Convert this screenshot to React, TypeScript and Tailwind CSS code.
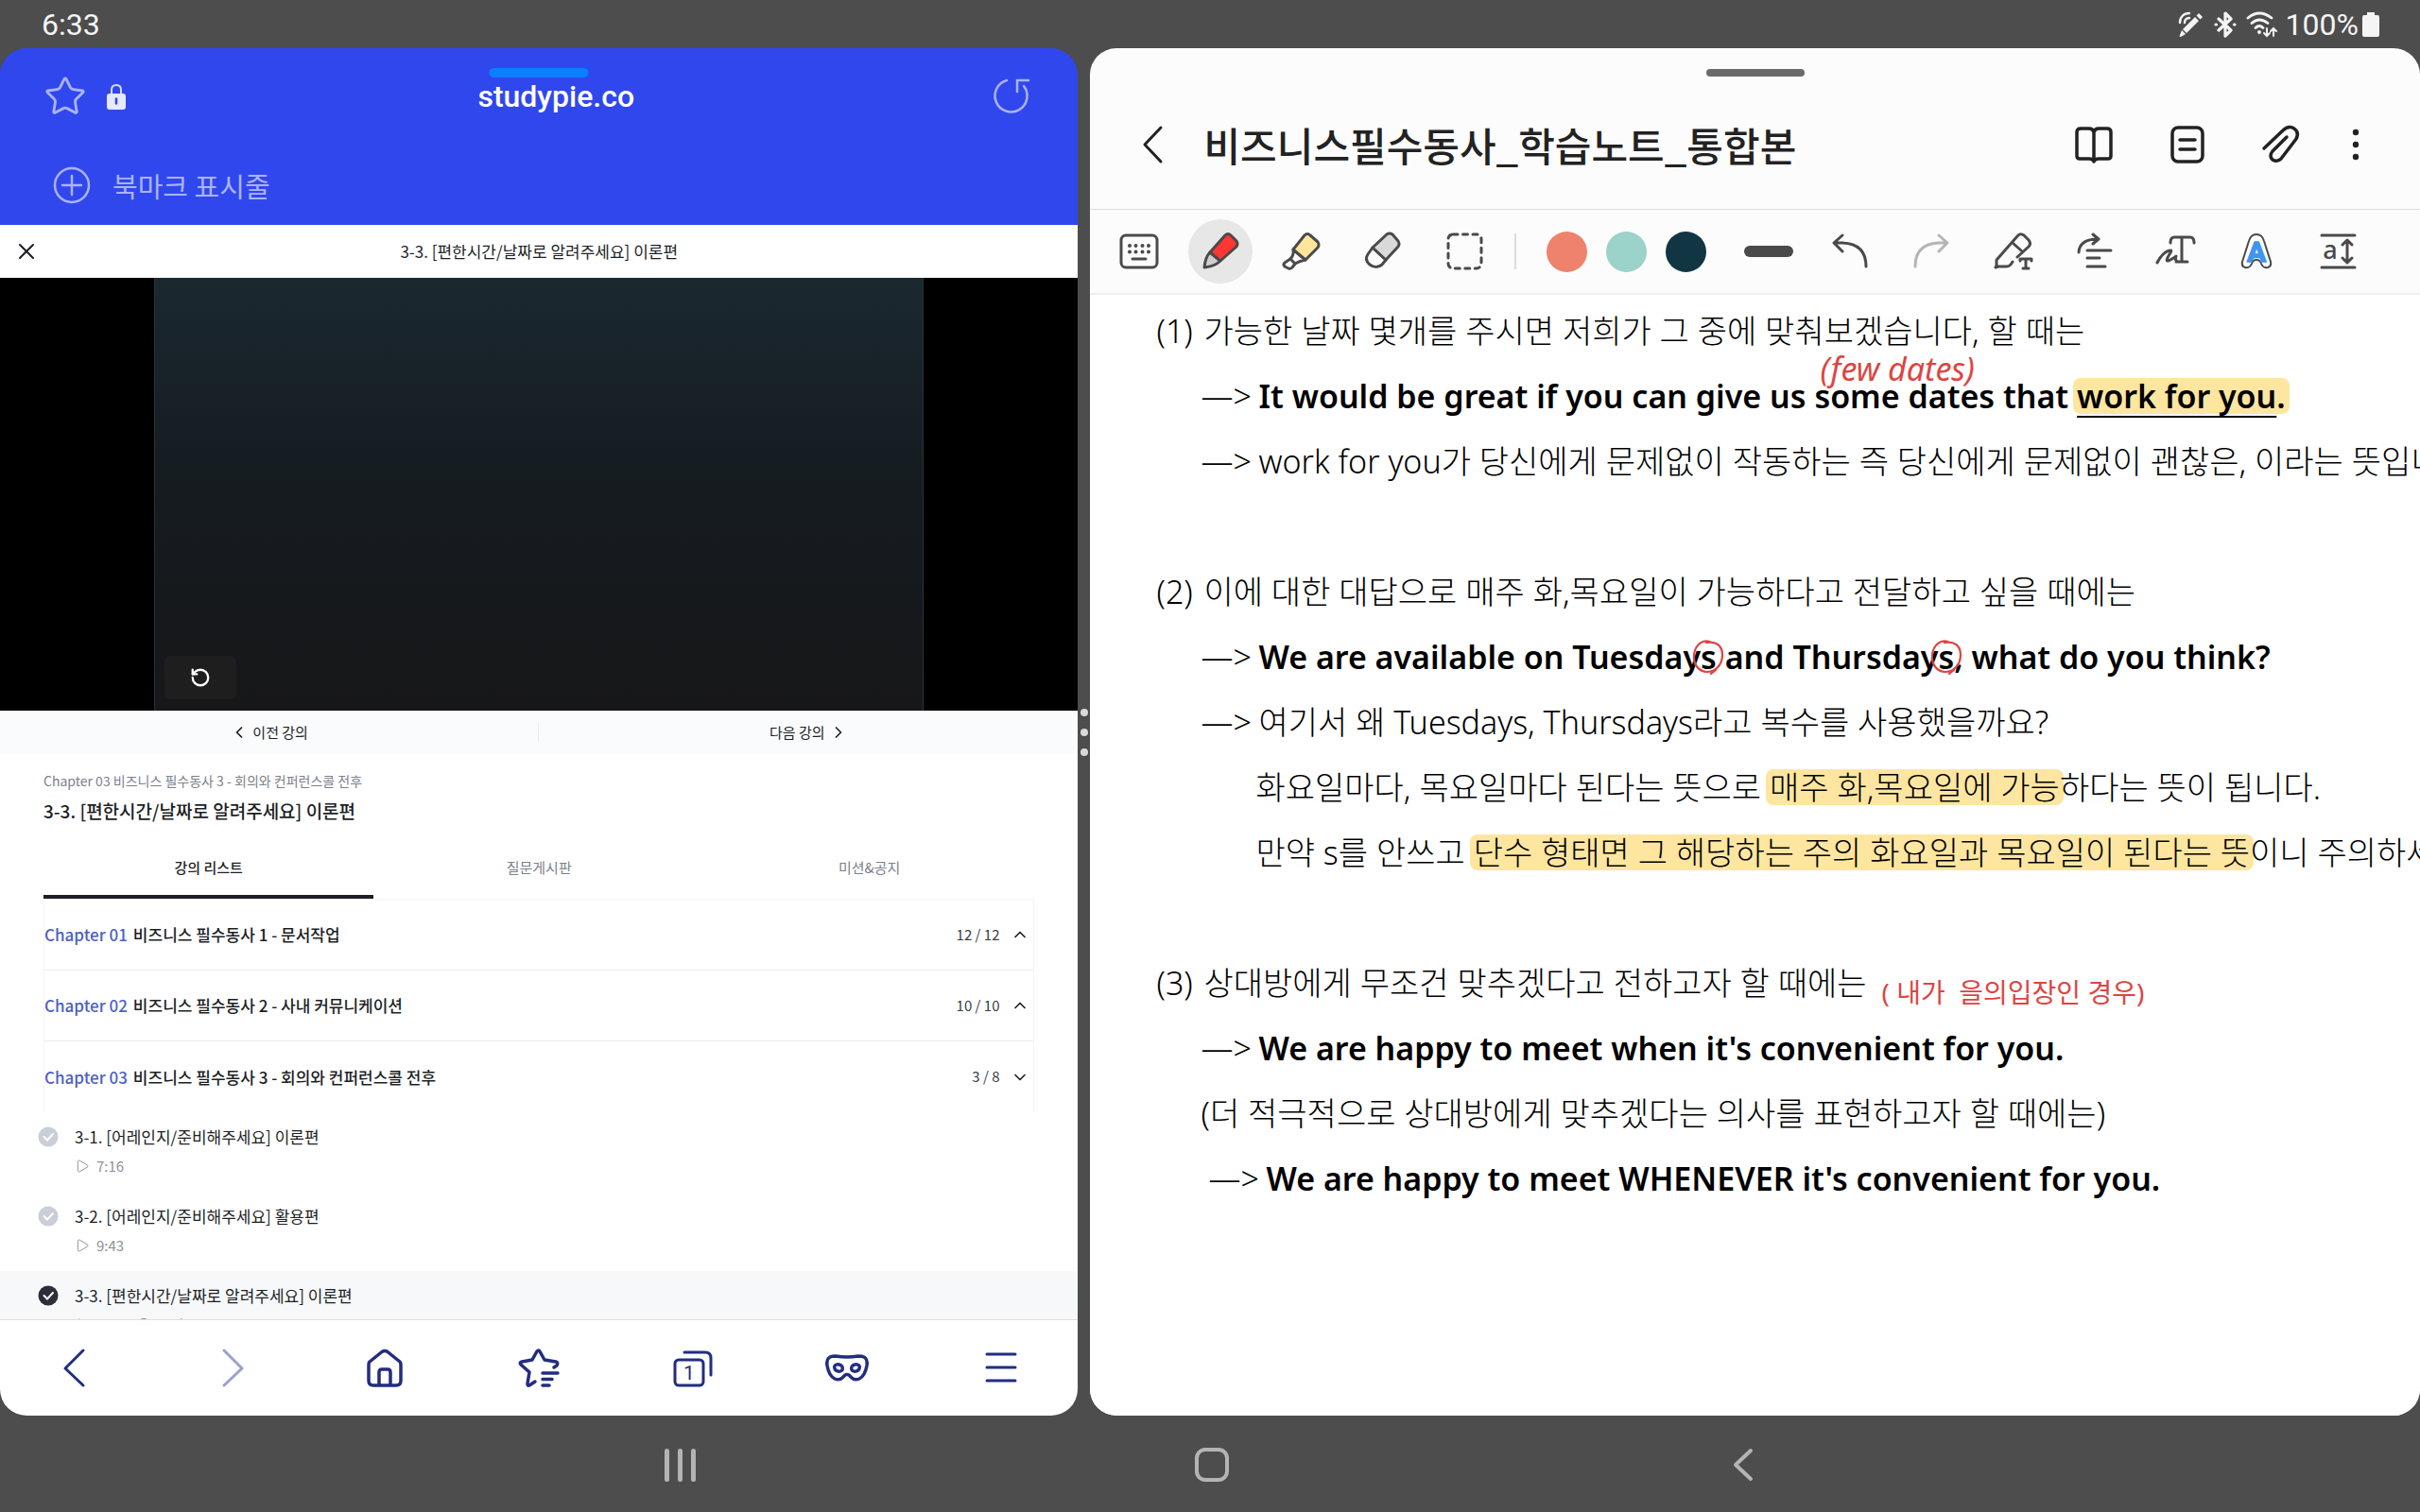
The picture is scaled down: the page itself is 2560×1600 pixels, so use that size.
import type { ReactNode } from "react";
import { ChevronDown, ChevronLeft, ChevronRight, ChevronUp, Circle, Play, RotateCcw, Star, X } from "lucide-react";

const SANS = "font-['Noto_Sans_CJK_KR','Noto_Sans',sans-serif]";
const NOTE = "font-['Noto_Sans','Noto_Sans_CJK_KR',sans-serif]";

type IconProps = { children: ReactNode; className?: string; w?: number };

/** Line icon on a 48px artboard. */
function Icon({ children, className = "", w = 3 }: IconProps) {
  return (
    <svg viewBox="0 0 48 48" className={`h-12 w-12 shrink-0 ${className}`} fill="none" stroke="currentColor" strokeWidth={w} strokeLinecap="round" strokeLinejoin="round" aria-hidden="true">
      {children}
    </svg>
  );
}

function StatusBar() {
  return (
    <header className="flex h-[51px] shrink-0 items-center justify-between pl-11 pr-[43px] font-['Roboto',sans-serif] text-[32px] text-[#f5f5f5]">
      <time>6:33</time>
      <div className="flex items-center">
        {/* S pen */}
        <svg viewBox="0 0 28 28" className="mr-2.5 h-7 w-7" fill="none" stroke="currentColor" strokeWidth="2.4" strokeLinecap="round" aria-label="S Pen">
          <path d="M2 12C2 6 6 2 12 2M7 12c0-3 2-5 5-5" />
          <path d="M22 2l4 4-2.500 2.500-4-4zM18 6l4 4L9 23l-4-4z" fill="currentColor" stroke="none" />
          <path d="M4 20l4 4-5 3q-2 0-1-2z" fill="currentColor" stroke="none" />
        </svg>
        <svg viewBox="0 0 24 28" className="mr-2.5 h-7 w-6" fill="none" stroke="currentColor" strokeWidth="3.200" strokeLinejoin="round" strokeLinecap="round" aria-label="Bluetooth">
          <path d="M5 8l13 12-6 6V2l6 6L5 20" />
          <path d="M2 14h.5M21.500 14h.5" />
        </svg>
        <svg viewBox="0 0 34 28" className="mr-2 h-7 w-[34px]" fill="none" stroke="currentColor" strokeWidth="2.800" strokeLinecap="round" aria-label="Wi-Fi">
          <path d="M2 7q12-10 25 0M6 12.500q8-7 17 0M10 17.500q4-4 8 0" />
          <circle cx="14" cy="22" r="2" fill="currentColor" stroke="none" />
          <path d="M22 18v8m-3-3l3 3 3-3M29 26v-8m-3 3l3-3 3 3" strokeWidth="2" />
        </svg>
        <span>100%</span>
        <svg viewBox="0 0 18 26" className="ml-1 h-[26px] w-[18px]" fill="currentColor" aria-label="Battery">
          <path d="M5 0h8v3h3q2 0 2 2v19q0 2-2 2H2q-2 0-2-2V5q0-2 2-2h3z" />
        </svg>
      </div>
    </header>
  );
}

function BrowserHeader() {
  return (
    <div className="relative flex h-[187px] shrink-0 flex-col bg-[#3147ee] text-[#aab4fa]">
      <div className="absolute left-1/2 top-[21px] h-[10px] w-[105px] -translate-x-1/2 rounded-full bg-[#0a80ff]" />
      <div className="flex h-[102px] items-center px-[46px]">
        <div className="flex flex-1 items-center gap-[21px]">
          <button aria-label="북마크 추가"><Star className="h-[46px] w-[46px]" strokeWidth={1.5} /></button>
          <svg viewBox="0 0 20 28" className="h-7 w-5" aria-label="보안 연결">
            <path d="M5 13V7q0-5 5-5t5 5v6" fill="none" stroke="#d5daff" strokeWidth="2" />
            <rect x="0" y="11" width="20" height="17" rx="3" fill="#e6e9ff" />
            <path d="M10 16.500v5" stroke="#3147ee" strokeWidth="2.500" strokeLinecap="round" />
          </svg>
        </div>
        <span className="ml-9 font-['Roboto',sans-serif] text-[32px] font-medium text-white">studypie.co</span>
        <div className="flex flex-1 justify-end">
          <button aria-label="새로고침"><Icon w={2.500}><path d="M19 7a17 17 0 1 0 18 6M30 19V7h12" strokeLinejoin="miter" /></Icon></button>
        </div>
      </div>
      <button className="flex flex-1 items-center gap-[19px] px-[52px]">
        <Icon w={2.500}><circle cx="24" cy="24" r="18" /><path d="M24 14v20M14 24h20" /></Icon>
        <span className="text-[29px] leading-[44px]">북마크 표시줄</span>
      </button>
    </div>
  );
}

function Player() {
  return (
    <div className="flex shrink-0 justify-center bg-black">
      <div className="flex aspect-video w-[71.4%] items-end border-x border-[#2c3338] bg-linear-to-b from-[#1a2830] via-[#151b1f] to-[#171719] px-2.5 pb-3">
        <button aria-label="다시 재생" className="grid h-[46px] w-[76px] place-items-center rounded-md bg-[#1e1e1e] text-white">
          <RotateCcw className="h-[22px] w-[22px]" strokeWidth={2.500} />
        </button>
      </div>
    </div>
  );
}

const CHAPTERS = [
  { no: "Chapter 01", title: "비즈니스 필수동사 1 - 문서작업", count: "12 / 12", open: false },
  { no: "Chapter 02", title: "비즈니스 필수동사 2 - 사내 커뮤니케이션", count: "10 / 10", open: false },
  { no: "Chapter 03", title: "비즈니스 필수동사 3 - 회의와 컨퍼런스콜 전후", count: "3 / 8", open: true },
];

const LESSONS = [
  { title: "3-1. [어레인지/준비해주세요] 이론편", time: "7:16", active: false },
  { title: "3-2. [어레인지/준비해주세요] 활용편", time: "9:43", active: false },
  { title: "3-3. [편한시간/날짜로 알려주세요] 이론편", time: "8:21", active: true },
];

function LessonPage() {
  return (
    <div className="flex min-h-0 flex-1 flex-col overflow-hidden bg-white text-[#1c1f26]">
      <div className="flex h-14 shrink-0 items-center px-3.5">
        <button aria-label="닫기"><X className="h-7 w-7" strokeWidth={1.75} /></button>
        <h1 className="flex-1 pr-7 text-center text-[17px]">3-3. [편한시간/날짜로 알려주세요] 이론편</h1>
      </div>
      <Player />
      <nav className="grid h-[46px] shrink-0 grid-cols-2 items-center bg-[#fafbfd] text-[15px]">
        <button className="flex h-5 items-center justify-center gap-1 border-r border-[#e9ebee]"><ChevronLeft className="h-5 w-5" />이전 강의</button>
        <button className="flex h-5 items-center justify-center gap-1">다음 강의<ChevronRight className="h-5 w-5" /></button>
      </nav>
      <div className="shrink-0 px-[46px]">
        <p className="mt-4 text-sm leading-6 text-[#7b818a]">Chapter 03 비즈니스 필수동사 3 - 회의와 컨퍼런스콜 전후</p>
        <h2 className="mt-1 text-[19px] leading-8 font-medium">3-3. [편한시간/날짜로 알려주세요] 이론편</h2>
        <div role="tablist" className="mt-4 grid h-[62px] grid-cols-3 border-b border-[#f4f5f6] text-[15px] text-[#7b818a]">
          <button role="tab" aria-selected="true" className="border-b-4 border-[#1c1f2a] font-medium text-[#1c1f26]">강의 리스트</button>
          <button role="tab" className="border-b-4 border-transparent">질문게시판</button>
          <button role="tab" className="border-b-4 border-transparent">미션&amp;공지</button>
        </div>
        <div className="divide-y divide-[#ececee] border-x border-[#f4f5f6]">
          {CHAPTERS.map((c) => (
            <button key={c.no} aria-expanded={c.open} className="flex h-[75px] w-full items-center pr-1 text-left text-[17px] font-medium">
              <span className="mr-1.5 text-[#4c5fc4]">{c.no}</span>
              <span>{c.title}</span>
              <span className="ml-auto text-[15px] font-normal text-[#3a3e46]">{c.count}</span>
              {c.open ? <ChevronDown className="ml-3 h-5 w-5" /> : <ChevronUp className="ml-3 h-5 w-5" />}
            </button>
          ))}
        </div>
      </div>
      <ul>
        {LESSONS.map((l) => (
          <li key={l.title} className={`flex h-[84px] items-start gap-[17px] px-10 pt-[14px] ${l.active ? "bg-[#f7f8fa]" : ""}`}>
            <svg viewBox="0 0 22 22" className="mt-px h-[22px] w-[22px]" aria-label="수강 완료">
              <circle cx="11" cy="11" r="10.500" fill={l.active ? "#2b2f3a" : "#c9ced8"} />
              <path d="M6.500 11l3.500 3.500 6-6.500" fill="none" stroke="#fff" strokeWidth="2" strokeLinecap="round" />
            </svg>
            <div>
              <a href="#lesson" className="block text-[17px] leading-6">{l.title}</a>
              <p className="mt-[7px] flex items-center gap-[7px] text-[15px] leading-6 text-[#8d9299]">
                <Play className="h-4 w-4" strokeWidth={1.5} />{l.time}
                {l.active && <><Circle className="ml-1.5 h-4 w-4" strokeWidth={1.5} />수강중</>}
              </p>
            </div>
          </li>
        ))}
      </ul>
    </div>
  );
}

function BrowserToolbar() {
  return (
    <nav className="grid h-[102px] shrink-0 grid-cols-7 place-items-center border-t border-[#dedee2] bg-white text-[#232d80]">
      <button aria-label="뒤로"><Icon><path d="M31 5L12 24l19 18" /></Icon></button>
      <button aria-label="앞으로" className="text-[#9aa0cc]"><Icon><path d="M17 5l19 19-19 18" /></Icon></button>
      <button aria-label="홈">
        <Icon w={3.500}><path d="M7 20q0-2 1-3L21 6.500q3-2 6 0L40 17q1 1 1 3v17q0 5-5 5H12q-5 0-5-5zM18 42V28q0-3 3-3h6q3 0 3 3v14" /></Icon>
      </button>
      <button aria-label="북마크">
        <Icon w={3.500}><path d="M20 38l-6 4q-2 1-2-2l2-12-9-8q-2-2 1-3l11-2 5-9q2-2 3 0l5 9 12 2q3 1 1 4l-3 2M28 29h16M28 35.500h10M28 42h7" /></Icon>
      </button>
      <button aria-label="탭 1개">
        <Icon>
          <rect x="5" y="15" width="30" height="27" rx="4" /><path d="M15 7h22q6 0 6 6v18" />
          <text x="20" y="36" textAnchor="middle" fontSize="21" fill="currentColor" stroke="none" fontFamily="Roboto, sans-serif">1</text>
        </Icon>
      </button>
      <button aria-label="시크릿 모드">
        <Icon w={3.500}>
          <path d="M6 12q2-1 6-1 12 2 24 0 4 0 6 1 4 2 3 9-2 11-8 14-5 2-8-1l-3-3q-2-1-4 0l-3 3q-3 3-8 1-6-3-8-14-1-7 3-9z" />
          <ellipse cx="15" cy="23.500" rx="4.500" ry="3.500" transform="rotate(20 15 23.500)" /><ellipse cx="33" cy="23.500" rx="4.500" ry="3.500" transform="rotate(-20 33 23.500)" />
        </Icon>
      </button>
      <button aria-label="메뉴"><Icon><path d="M9 9h30M9 23h30M9 37h30" /></Icon></button>
    </nav>
  );
}

function NotesHeader() {
  return (
    <div className="relative flex h-[171px] shrink-0 items-center border-b border-[#dcdcdc] pl-[41px] pr-16 pt-[34px] text-[#222]">
      <div className="absolute left-1/2 top-[22px] h-2 w-[104px] -translate-x-1/2 rounded-full bg-[#6b6b6b]" />
      <button aria-label="뒤로" className="mr-[31px]"><Icon><path d="M34 6L17 24l17 18" /></Icon></button>
      <h1 className="flex-1 text-[42px] leading-[60px] font-medium">비즈니스필수동사_학습노트_통합본</h1>
      <div className="flex gap-[51px]">
        <button aria-label="읽기 모드">
          <Icon w={3.500}><path d="M24 11q-1-4-5-4h-9q-4 0-4 4v25q0 3 3 3h10q4 0 5 3 1-3 5-3h10q3 0 3-3V11q0-4-4-4h-9q-4 0-5 4zv30" /></Icon>
        </button>
        <button aria-label="페이지"><Icon w={3.500}><rect x="8" y="6" width="32" height="36" rx="6" /><path d="M16 19h16M16 29h16" /></Icon></button>
        <button aria-label="첨부">
          <Icon w={3.500}><path d="M6 28L26 9q5-5 10-3 8 4 4 12L24 39q-4 4-9 1-4-4 0-9l15-15" /></Icon>
        </button>
        <button aria-label="더보기">
          <svg viewBox="0 0 8 48" className="h-12 w-2" fill="currentColor"><circle cx="4" cy="11" r="3.200" /><circle cx="4" cy="24" r="3.200" /><circle cx="4" cy="37" r="3.200" /></svg>
        </button>
      </div>
    </div>
  );
}

function Tool({ label, on, children }: { label: string; on?: boolean; children: ReactNode }) {
  return (
    <button aria-label={label} className="grid w-[86px] shrink-0 place-items-center">
      <span className={`grid h-[68px] w-[68px] place-items-center rounded-full ${on ? "bg-[#e7e7e7]" : ""}`}>{children}</span>
    </button>
  );
}

function NotesToolbar() {
  return (
    <div className="flex h-[90px] shrink-0 items-center overflow-hidden border-b-2 border-[#efefef] pl-[9px] text-[#4a4a4a]">
      <Tool label="키보드">
        <Icon>
          <rect x="5" y="7" width="38" height="34" rx="5" /><path d="M17 32h14" />
          <path d="M14 18h0M20.500 18h0M27.500 18h0M34 18h0M14 24.500h0M20.500 24.500h0M27.500 24.500h0M34 24.500h0" strokeWidth="4" />
        </Icon>
      </Tool>
      <Tool label="펜" on>
        <Icon>
          <path d="M13 25q-5 5-6 16 11-1 17-7z" fill="#cfcfcf" />
          <path d="M13 25L29 7q3-3 6 0l6 6q2 3 0 6L24 34z" fill="#ff3733" />
        </Icon>
      </Tool>
      <Tool label="형광펜">
        <Icon>
          <path d="M15 22q1 6-3 10l-6 4q-2 2 0 4l4 2q2 1 4-1l3-4q5-3 11-4z" fill="#fff" />
          <path d="M15 22L27 7q3-3 6 0l8 7q2 3 0 6L28 33z" fill="#fde69b" />
          <path d="M12 32l5 5" />
        </Icon>
      </Tool>
      <Tool label="지우개">
        <Icon>
          <path d="M13 20l-5 7q-4 6 2 11 7 5 13 0l4-5z" fill="#fff" />
          <path d="M13 20L28 6q3-2 6 0l6 7q2 3 0 6L27 33z" fill="#d9d9d9" />
        </Icon>
      </Tool>
      <Tool label="선택"><Icon><rect x="7" y="6" width="35" height="36" rx="5" strokeDasharray="5 5.500" /></Icon></Tool>
      <div className="ml-2.5 mr-8 h-[38px] w-[2px] shrink-0 bg-[#dcdcdc]" />
      <div className="flex shrink-0 gap-5">
        <button aria-label="산호색" className="h-[43px] w-[43px] rounded-full bg-[#ef826c]" />
        <button aria-label="민트색" className="h-[43px] w-[43px] rounded-full bg-[#9bd2c9]" />
        <button aria-label="남색" className="h-[43px] w-[43px] rounded-full bg-[#123543]" />
      </div>
      <div className="w-[23px] shrink-0" />
      <Tool label="굵기"><span className="h-3 w-[52px] rounded-full bg-[#4a4a4a]" /></Tool>
      <Tool label="실행 취소"><Icon><path d="M16 7l-9 8 9 9M8 15h8q25 1 25 25" /></Icon></Tool>
      <Tool label="다시 실행"><Icon className="text-[#b5b5b5]"><path d="M32 7l9 8-9 9M40 15h-8Q7 16 7 40" /></Icon></Tool>
      <Tool label="텍스트 변환">
        <Icon><path d="M8 32L29 8q3-4 7-1l5 5q3 4 0 7L29 30M7 33v6l-1 2 3-1h9q2 0 4-2l2-3M24 15l9 8M32 34v-2h12v2M38 32v10M35 42h6" /></Icon>
      </Tool>
      <Tool label="정렬"><Icon><path d="M8 25q1-14 20-14M23 6l6 5-6 5M17 23h25M17 31h13M17 40h19" /></Icon></Tool>
      <Tool label="손글씨 다듬기"><Icon><path d="M19 15q0-6 4-6h17q4 0 4 6M31 9v26M25 35h12M5 36q6-12 14-13 2 0-1 4-5 8-1 7 6-3 8-5-2 6 3 6" /></Icon></Tool>
      <Tool label="스타일">
        <Icon w={2}>
          <path d="M24 6q6 0 8 7l7 22q1 5-3 6-5 1-7-4-1-4-5-4t-5 4q-2 5-7 4-4-1-3-6l7-22q2-7 8-7z" fill="#fff" />
          <text x="24" y="35" textAnchor="middle" fontSize="30" fontWeight="700" fill="#3d95ee" stroke="#3d95ee" strokeWidth="1.500" fontFamily="Roboto, sans-serif">A</text>
        </Icon>
      </Tool>
      <Tool label="줄 간격">
        <Icon>
          <path d="M7 7h35M7 41h35M34 13v22M29 17l5-5 5 5M29 31l5 5 5-5" />
          <text x="16" y="32" textAnchor="middle" fontSize="27" fontWeight="500" fill="currentColor" stroke="none" fontFamily="Noto Sans, sans-serif">a</text>
        </Icon>
      </Tool>
    </div>
  );
}

/** Red pen ring around a letter. */
function Ring({ children }: { children: ReactNode }) {
  return (
    <span className="relative">
      {children}
      <svg viewBox="0 0 36 40" className="absolute left-1/2 top-1/2 h-10 w-9 -translate-x-1/2 -translate-y-1/2" fill="none" stroke="#dc4543" strokeWidth="2.200" strokeLinecap="round" aria-hidden="true">
        <path d="M22 5C12 0 4 8 3 18s5 18 14 18 16-8 16-18S26 3 16 5M21 38l5-4" />
      </svg>
    </span>
  );
}

const Mark = ({ children }: { children: ReactNode }) => (
  <mark className="-mx-1 inline-block rounded-lg bg-[#fee6a0] px-1 leading-[38px] text-black">{children}</mark>
);

const Head = ({ no, children }: { no: number; children: ReactNode }) => (
  <p><span className="inline-block w-[50px]">({no})</span>{children}</p>
);

const Arrow = ({ bold, children }: { bold?: boolean; children: ReactNode }) => (
  <p className="pl-[47px]"><span className="inline-block w-[61px]">—&gt;</span><span className={bold ? "font-semibold" : ""}>{children}</span></p>
);

function NotePage() {
  return (
    <article className={`min-h-0 flex-1 overflow-hidden whitespace-nowrap bg-white pl-[70px] pt-1 text-[34px] leading-[69px] font-light text-black ${NOTE}`}>
      <Head no={1}>가능한 날짜 몇개를 주시면 저희가 그 중에 맞춰보겠습니다, 할 때는</Head>
      <Arrow bold>
        It would be great if you can give us{" "}
        <span className="relative">
          some dates
          <span className="absolute -top-7 left-1.5 text-[34px] leading-[44px] font-normal text-[#dc4543] italic">(few dates)</span>
        </span>{" "}
        that <Mark><u className="decoration-2 underline-offset-8">work for you</u>.</Mark>
      </Arrow>
      <Arrow>work for you가 당신에게 문제없이 작동하는 즉 당신에게 문제없이 괜찮은, 이라는 뜻입니다.</Arrow>
      <div className="h-[69px]" />
      <Head no={2}>이에 대한 대답으로 매주 화,목요일이 가능하다고 전달하고 싶을 때에는</Head>
      <Arrow bold>We are available on Tuesday<Ring>s</Ring> and Thursday<Ring>s</Ring>, what do you think?</Arrow>
      <Arrow>여기서 왜 Tuesdays, Thursdays라고 복수를 사용했을까요?</Arrow>
      <p className="pl-[105px]">화요일마다, 목요일마다 된다는 뜻으로 <Mark>매주 화,목요일에 가능</Mark>하다는 뜻이 됩니다.</p>
      <p className="pl-[105px]">만약 s를 안쓰고 <Mark>단수 형태면 그 해당하는 주의 화요일과 목요일이 된다는 뜻</Mark>이니 주의하세요.</p>
      <div className="h-[69px]" />
      <Head no={3}>
        상대방에게 무조건 맞추겠다고 전하고자 할 때에는
        <span className="inline-block pl-4 align-sub text-[28px] leading-8 font-normal text-[#dc4543]">( 내가 &nbsp;을의입장인 경우)</span>
      </Head>
      <Arrow bold>We are happy to meet when it's convenient for you.</Arrow>
      <p className="pl-[47px]">(더 적극적으로 상대방에게 맞추겠다는 의사를 표현하고자 할 때에는)</p>
      <div className="pl-2"><Arrow bold>We are happy to meet WHENEVER it's convenient for you.</Arrow></div>
    </article>
  );
}

function SystemNav() {
  return (
    <nav className="flex h-[102px] shrink-0 items-center justify-center pl-1 pt-0.5 text-[#b4b4b4]">
      <button aria-label="최근 앱" className="flex w-[22%] justify-center gap-[9px]">
        <span className="h-[35px] w-[5px] rounded-full bg-current" />
        <span className="h-[35px] w-[5px] rounded-full bg-current" />
        <span className="h-[35px] w-[5px] rounded-full bg-current" />
      </button>
      <button aria-label="홈" className="flex w-[22%] justify-center"><span className="h-9 w-9 rounded-[11px] border-4 border-current" /></button>
      <button aria-label="뒤로" className="flex w-[22%] justify-center"><Icon w={4}><path d="M32 9L16 24l16 15" /></Icon></button>
    </nav>
  );
}

export default function App() {
  return (
    <div className={`flex h-screen flex-col overflow-hidden bg-[#4d4d4d] ${SANS}`}>
      <StatusBar />
      <main className="flex min-h-0 flex-1">
        <section className="flex w-[44.55%] shrink-0 flex-col overflow-hidden rounded-[28px]">
          <BrowserHeader />
          <LessonPage />
          <BrowserToolbar />
        </section>
        <div className="flex w-[13px] shrink-0 flex-col items-center justify-center gap-[13px]">
          <span className="h-2 w-2 rounded-full bg-[#dadada]" />
          <span className="h-2 w-2 rounded-full bg-[#dadada]" />
          <span className="h-2 w-2 rounded-full bg-[#dadada]" />
        </div>
        <section className="flex min-w-0 flex-1 flex-col overflow-hidden rounded-[28px] bg-[#fcfcfc]">
          <NotesHeader />
          <NotesToolbar />
          <NotePage />
        </section>
      </main>
      <SystemNav />
    </div>
  );
}
